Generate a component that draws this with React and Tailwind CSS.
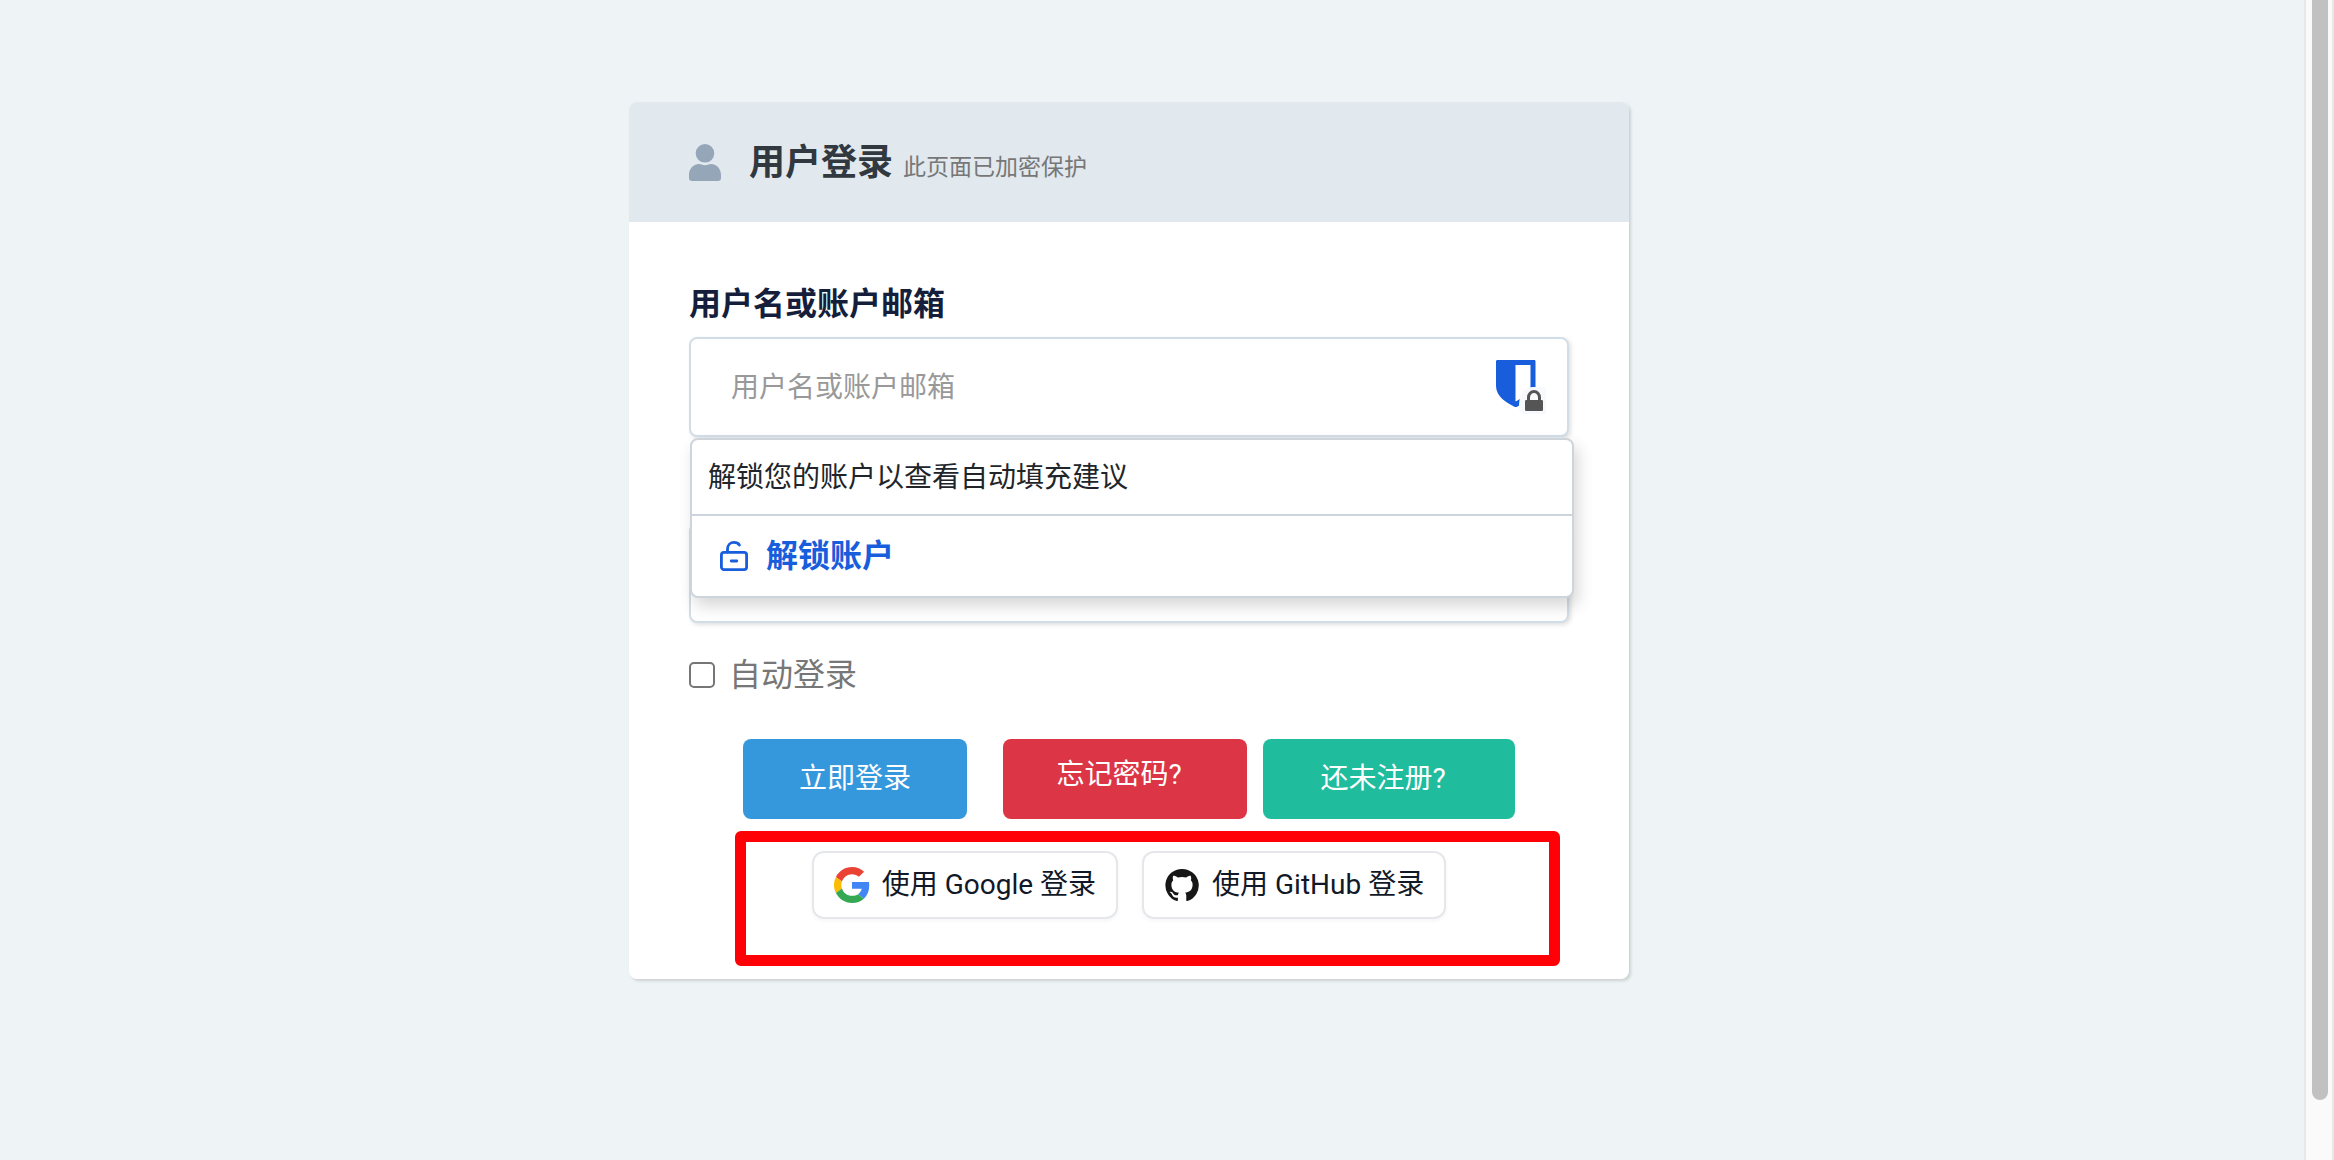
import { useState } from 'react'

function UserIcon() {
  return (
    <svg viewBox="0 0 32 37" className="w-8 h-[37px] shrink-0" fill="#96a6b9" aria-hidden="true">
      <circle cx="16" cy="9.3" r="9.3" />
      <path d="M0 34V31C0 25 4 20 10 20C12 20 13 21.2 16 21.2S20 20 22 20C28 20 32 25 32 31V34C32 36 31 37 29 37H3C1 37 0 36 0 34Z" />
    </svg>
  )
}

function ShieldLockIcon() {
  return (
    <svg viewBox="0 0 50 54" className="w-[50px] h-[54px]" aria-hidden="true">
      <path fill="#175ddc" fillRule="evenodd" d="M1.5 0H38C39.2 0 39.5.5 39.5 1.6V27C39.5 37 27 44 21.5 46.6Q19.7 47.6 18 46.6C11 43 0 36.5 0 26V1.6C0 .5.5 0 1.5 0ZM19.5 5V41.5C25 39 34.5 33 34.5 26V5Z" />
      <path fill="#f8f9fc" d="M23 46C23 35 28 27 37 27H47Q50 27 50 30V54H28Q23 54 23 46Z" />
      <path fill="none" stroke="#555" strokeWidth="3" d="M32.5 41V37.5a5.5 6 0 0 1 11 0V41" />
      <rect x="29" y="40" width="18" height="11" rx="1.3" fill="#555" />
    </svg>
  )
}

function UnlockIcon() {
  return (
    <svg viewBox="0 0 28 30" className="w-7 h-[30px] shrink-0" fill="none" stroke="#175ddc" strokeWidth="2.8" strokeLinecap="round" aria-hidden="true">
      <rect x="1.4" y="11.4" width="25.2" height="17.2" rx="2.6" />
      <path d="M7.5 11V8.2C7.5 4 10.5 1.4 14 1.4C16.5 1.4 18.4 2.4 19.4 4M11.2 20H16.8" />
    </svg>
  )
}

function GoogleIcon() {
  return (
    <svg viewBox="0 0 48 48" className="w-9 h-9 shrink-0" aria-hidden="true">
      <path fill="#EA4335" d="M24 9.5c3.54 0 6.71 1.22 9.21 3.6l6.85-6.85C35.9 2.38 30.47 0 24 0 14.62 0 6.51 5.38 2.56 13.22l7.98 6.19C12.43 13.72 17.74 9.5 24 9.5z" />
      <path fill="#4285F4" d="M46.98 24.55c0-1.57-.15-3.09-.38-4.55H24v9.02h12.94c-.58 2.96-2.26 5.48-4.78 7.18l7.73 6c4.51-4.18 7.09-10.36 7.09-17.65z" />
      <path fill="#FBBC05" d="M10.53 28.59c-.48-1.45-.76-2.99-.76-4.59s.27-3.14.76-4.59l-7.98-6.19C.92 16.46 0 20.12 0 24c0 3.88.92 7.54 2.56 10.78l7.97-6.19z" />
      <path fill="#34A853" d="M24 48c6.48 0 11.93-2.13 15.89-5.81l-7.73-6c-2.15 1.45-4.92 2.3-8.16 2.3-6.26 0-11.57-4.22-13.47-9.91l-7.98 6.19C6.51 42.62 14.62 48 24 48z" />
    </svg>
  )
}

function GitHubIcon() {
  return (
    <svg viewBox="0 0 24 24" className="w-9 h-9 shrink-0" fill="#181717" aria-hidden="true">
      <path d="M12 1.27a11 11 0 0 0-3.48 21.46c.55.09.73-.28.73-.55v-1.84c-3.03.64-3.67-1.46-3.67-1.46-.55-1.29-1.28-1.65-1.28-1.65-.92-.65.1-.65.1-.65 1.1 0 1.73 1.1 1.73 1.1.92 1.65 2.57 1.2 3.21.92a2 2 0 0 1 .64-1.47c-2.47-.27-5.04-1.19-5.04-5.5 0-1.1.46-2.1 1.2-2.84a3.76 3.76 0 0 1 0-2.93s.91-.28 3.11 1.1c1.8-.49 3.7-.49 5.5 0 2.1-1.38 3.02-1.1 3.02-1.1a3.76 3.76 0 0 1 .1 2.93c.83.74 1.2 1.74 1.2 2.94 0 4.21-2.57 5.13-5.04 5.4.45.37.82.92.82 2.02v3.03c0 .27.1.64.73.55A11 11 0 0 0 12 1.27" />
    </svg>
  )
}

const inputClass =
  'block w-full h-[100px] px-10 rounded-lg border-2 border-[#d1dde7] bg-white text-[28px] text-[#313840] placeholder:text-[#999] shadow-[2px_2px_4px_rgba(0,0,0,0.12)] outline-none'

function SocialButton({ icon, children }) {
  return (
    <button type="button" className="flex items-center gap-3 h-[68px] px-5 rounded-xl border-2 border-gray-200 bg-white text-[28px] text-[#111827] whitespace-nowrap shadow-[0_2px_4px_rgba(0,0,0,0.04)]">
      {icon}
      {children}
    </button>
  )
}

// Password manager suggestions shown under the focused field
function AutofillMenu() {
  return (
    <div className="absolute left-px -right-[5px] top-full mt-px z-10 rounded-lg border-2 border-[#ced4dc] bg-white shadow-[4px_8px_16px_rgba(0,0,0,0.16)]">
      <p className="h-[76px] px-4 leading-[76px] text-[28px] text-[#212529] border-b-2 border-[#ced4dc]">
        解锁您的账户以查看自动填充建议
      </p>
      <button type="button" className="flex items-center gap-[18px] w-full h-20 px-7 text-[32px] font-bold text-[#175ddc]">
        <UnlockIcon />
        解锁账户
      </button>
    </div>
  )
}

export default function App() {
  const [username, setUsername] = useState('')
  const [password, setPassword] = useState('')
  const [remember, setRemember] = useState(false)

  return (
    <div className="flex h-screen overflow-hidden bg-[#eef3f6] font-[Roboto,'Noto_Sans_CJK_SC',sans-serif]" lang="zh-CN">
      <main className="flex-1 pt-[102px] pr-[46px]">
        <section className="w-full max-w-[1000px] mx-auto rounded-lg bg-white shadow-[2px_2px_3px_rgba(0,0,0,0.14)]">
          <header className="flex items-center h-[120px] px-[60px] rounded-t-lg bg-[#e1e8ee]">
            <UserIcon />
            <h1 className="ml-7 pt-0.5 text-[36px] font-bold text-[#313840]">
              用户登录
              <small className="ml-2.5 text-[23px] font-normal text-[#777]">此页面已加密保护</small>
            </h1>
          </header>

          <form className="px-[60px] pt-[58px] pb-[60px]" onSubmit={e => e.preventDefault()}>
            <label htmlFor="username" className="block mb-2 text-[32px] leading-[49px] font-bold text-[#151e3b]">
              用户名或账户邮箱
            </label>
            <div className="relative">
              <input id="username" value={username} onChange={e => setUsername(e.target.value)} placeholder="用户名或账户邮箱" className={inputClass} />
              <span className="absolute right-[23px] top-[23px]"><ShieldLockIcon /></span>
              <AutofillMenu />
            </div>

            <input type="password" aria-label="密码" value={password} onChange={e => setPassword(e.target.value)} className={`${inputClass} mt-[86px]`} />

            <label className="flex items-center gap-3.5 mt-7 leading-[48px] text-[32px] text-[#777]">
              <input
                type="checkbox"
                checked={remember}
                onChange={e => setRemember(e.target.checked)}
                className="appearance-none w-[26px] h-[26px] rounded-[5px] border-2 border-[#767676] bg-white checked:bg-[#3498db]"
              />
              自动登录
            </label>

            <div className="flex pl-[54px] mt-10 text-[28px] text-white">
              <button type="submit" className="w-56 h-20 mr-9 rounded-lg bg-[#3698dc]">立即登录</button>
              <button type="button" className="w-[244px] h-20 mr-4 pr-3 pb-2 rounded-lg bg-[#dc3546]">忘记密码?</button>
              <button type="button" className="w-[252px] h-20 pr-3 rounded-lg bg-[#1fbc9e]">还未注册?</button>
            </div>

            <div className="relative flex justify-center gap-6 mt-8">
              <SocialButton icon={<GoogleIcon />}>使用 Google 登录</SocialButton>
              <SocialButton icon={<GitHubIcon />}>使用 GitHub 登录</SocialButton>
              <div className="absolute left-[46px] right-[9px] -top-5 h-[135px] rounded-md border-[11px] border-[#ff0006] pointer-events-none" />
            </div>
          </form>
        </section>
      </main>

      <aside className="w-[30px] h-full border-x-2 border-[#e8e8e8] bg-[#fafafa]" aria-hidden="true">
        <div className="w-4 h-[1100px] ml-1.5 rounded-b-full bg-[#c1c1c1]" />
      </aside>
    </div>
  )
}
